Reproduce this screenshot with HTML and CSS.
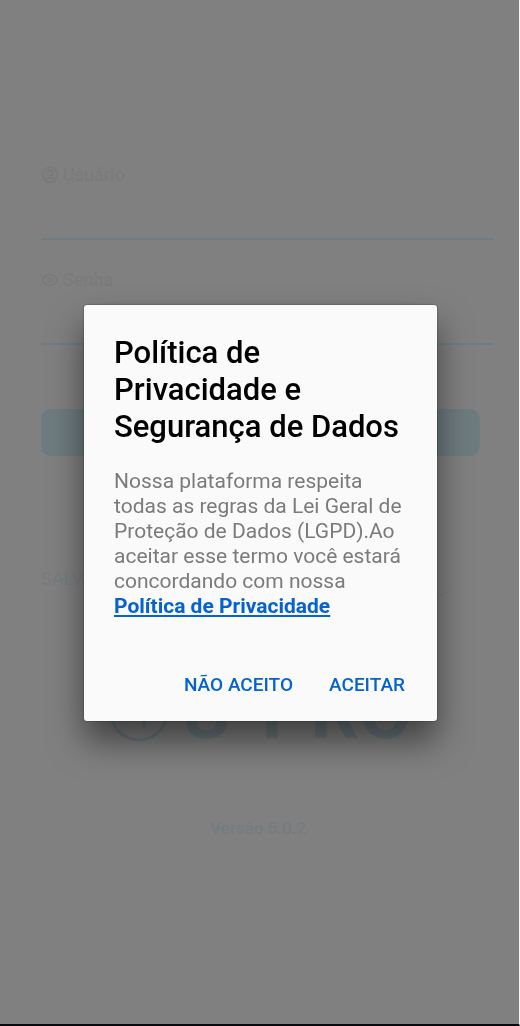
FILE: index.html
```html
<!DOCTYPE html>
<html lang="pt-BR">
<head>
<meta charset="utf-8">
<meta name="viewport" content="width=device-width, initial-scale=1">
<title>Política de Privacidade</title>
<link rel="stylesheet" href="styles.css">
</head>
<body>
<main class="login">
  <form class="form">
    <div class="field">
      <label class="label" for="user">
        <svg class="icon" viewBox="0 0 18 18" aria-hidden="true"><circle cx="9" cy="9" r="7.5"/><circle cx="9" cy="7" r="2.6"/><path d="M4 14c1-3 9-3 10 0"/></svg>
        Usuário
      </label>
      <input class="input" id="user" type="text">
    </div>
    <div class="field">
      <label class="label" for="password">
        <svg class="icon" viewBox="0 0 18 18" aria-hidden="true"><path d="M1.500 9C5 2 13 2 16.500 9C13 16 5 16 1.500 9z"/><circle cx="9" cy="9" r="2"/></svg>
        Senha
      </label>
      <input class="input" id="password" type="password">
    </div>
    <button class="submit" type="button" aria-label="Entrar"></button>
    <label class="save">SALVAR <input class="switch" type="checkbox"></label>
  </form>
  <div class="brand">
    <svg class="mark" viewBox="0 0 60 60" aria-hidden="true"><circle cx="30" cy="30" r="28"/><path d="M35 46V13L20 35h22"/></svg>
    <span>U-PRO</span>
  </div>
  <p class="version">Versão 5.0.2</p>
</main>
<div class="overlay">
  <section class="dialog" role="dialog" aria-modal="true" aria-labelledby="title">
    <h1 class="title" id="title">Política de Privacidade e Segurança de Dados</h1>
    <p class="text">Nossa plataforma respeita todas as regras da Lei Geral de Proteção de Dados (LGPD).Ao aceitar esse termo você estará concordando com nossa <a class="link" href="#">Política de Privacidade</a></p>
    <div class="actions">
      <button class="action" type="button">NÃO ACEITO</button>
      <button class="action" type="button">ACEITAR</button>
    </div>
  </section>
</div>
</body>
</html>
```
FILE: styles.css
```css
* { box-sizing: border-box; }
body {
  margin: 0;
  font-family: Roboto, sans-serif;
  background: #808080;
}
.login {
  min-height: 100vh;
  padding: 163px 26px 0 41px;
  border-right: 1px solid #f4f4f4;
  border-bottom: 2px solid #08090d;
}
.form { display: flex; flex-direction: column; }
.field {
  display: flex;
  flex-direction: column;
  height: 105px;
}
.label {
  display: flex;
  align-items: center;
  gap: 4px;
  font-size: 18px;
  font-weight: 500;
  line-height: 24px;
  color: #7b7b7b;
}
.icon {
  width: 18px;
  height: 18px;
  fill: none;
  stroke: #7a7a7a;
  stroke-width: 2;
}
.input {
  width: 100%;
  height: 53px;
  padding: 0;
  border: 0;
  border-bottom: 2px solid #6f7d83;
  background: none;
  outline: 0;
}
.submit {
  height: 47px;
  margin: 36px 13px 0 0;
  border: 0;
  border-radius: 10px;
  background: #6e7b7f;
}
.save {
  display: flex;
  justify-content: space-between;
  margin: 111px 39px 0 0;
  font-size: 18px;
  line-height: 24px;
  color: #757d80;
}
.switch {
  appearance: none;
  width: 40px;
  height: 28px;
  margin: 0;
  border-bottom: 1px solid #7b7b7b;
  border-radius: 14px;
}
.brand {
  display: flex;
  align-items: center;
  justify-content: center;
  gap: 12px;
  margin: 87px 13px 0 0;
  font-size: 76px;
  font-weight: 700;
  line-height: 60px;
  color: #6a787e;
}
.mark {
  width: 60px;
  height: 60px;
  fill: none;
  stroke: #6a787e;
  stroke-width: 3;
}
.version {
  margin: 76px 18px 0 0;
  font-size: 17px;
  font-weight: 500;
  line-height: 20px;
  text-align: center;
  color: #757c81;
}
.overlay {
  position: fixed;
  inset: 0;
  display: flex;
  align-items: center;
  justify-content: center;
  padding: 0 83px 0 84px;
}
.dialog {
  width: 100%;
  max-width: 420px;
  padding: 29px 22px 13px 30px;
  border-radius: 3px;
  background: #fafafa;
  box-shadow: 0 0 2px rgba(0, 0, 0, .5), 0 20px 34px rgba(0, 0, 0, .5);
}
.title {
  margin: 0;
  font-size: 31px;
  font-weight: 500;
  line-height: 37px;
  color: #000;
}
.text {
  margin: 24px 0 0;
  font-size: 21px;
  line-height: 25px;
  color: #7b7b7b;
}
.link {
  font-weight: 700;
  color: #0563d1;
}
.actions {
  display: flex;
  justify-content: flex-end;
  gap: 16px;
  margin-top: 41px;
}
.action {
  height: 48px;
  padding: 0 10px;
  border: 0;
  background: none;
  font-family: inherit;
  font-size: 19px;
  font-weight: 500;
  color: #0563d1;
}
```
